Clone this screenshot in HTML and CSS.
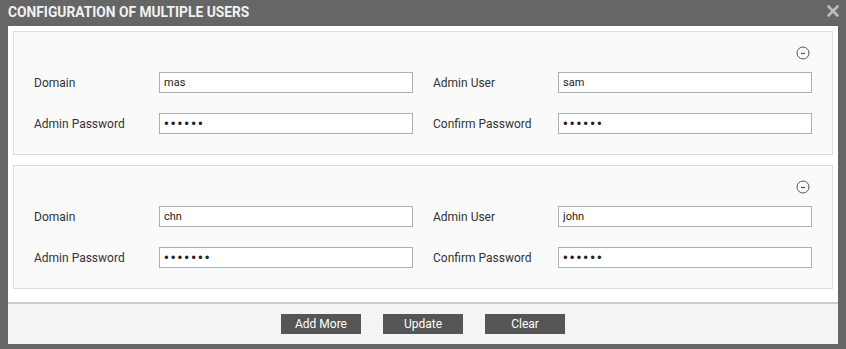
FILE: index.html
```html
<!DOCTYPE html>
<html lang="en">
<head>
    <meta charset="UTF-8">
    <meta name="viewport" content="width=device-width, initial-scale=1.0">
    <title>Configuration of multiple users</title>
    <link rel="stylesheet" href="styles.css">
</head>
<body>
    <div class="dialog">
        <header class="titlebar">
            <span>CONFIGURATION OF MULTIPLE USERS</span>
            <svg class="close" width="12" height="12" viewBox="0 0 12 12">
                <path d="M1.5 1.5 L10.5 10.5 M10.5 1.5 L1.5 10.5" stroke="#bdbdbd" stroke-width="2.6" stroke-linecap="round"/>
            </svg>
        </header>
        <div class="content">
            <div class="users">
                <div class="panel">
                    <div class="tools">
                        <svg class="minus" width="14" height="14" viewBox="0 0 14 14">
                            <circle cx="7" cy="7" r="6" fill="none" stroke="#555" stroke-width="1"/>
                            <line x1="5" y1="7.5" x2="9" y2="7.5" stroke="#555" stroke-width="1.2"/>
                        </svg>
                    </div>
                    <div class="fields">
                        <label>Domain</label>
                        <input type="text" value="mas">
                        <span></span>
                        <label>Admin User</label>
                        <input type="text" value="sam">
                        <label>Admin Password</label>
                        <input type="password" value="123456">
                        <span></span>
                        <label>Confirm Password</label>
                        <input type="password" value="123456">
                    </div>
                </div>
                <div class="panel">
                    <div class="tools">
                        <svg class="minus" width="14" height="14" viewBox="0 0 14 14">
                            <circle cx="7" cy="7" r="6" fill="none" stroke="#555" stroke-width="1"/>
                            <line x1="5" y1="7.5" x2="9" y2="7.5" stroke="#555" stroke-width="1.2"/>
                        </svg>
                    </div>
                    <div class="fields">
                        <label>Domain</label>
                        <input type="text" value="chn">
                        <span></span>
                        <label>Admin User</label>
                        <input type="text" value="john">
                        <label>Admin Password</label>
                        <input type="password" value="1234567">
                        <span></span>
                        <label>Confirm Password</label>
                        <input type="password" value="123456">
                    </div>
                </div>
            </div>
            <footer class="actions">
                <button>Add More</button>
                <button>Update</button>
                <button>Clear</button>
            </footer>
        </div>
    </div>
</body>
</html>
```

FILE: styles.css
```css
body {
    margin: 0;
    font-family: Roboto, "Liberation Sans", sans-serif;
    background-color: #666666;
}
.dialog {
    width: 846px;
    height: 349px;
    background-color: #666666;
    padding: 0 8px 5px;
    box-sizing: border-box;
    display: flex;
    flex-direction: column;
}
.titlebar {
    height: 26px;
    display: flex;
    align-items: center;
    justify-content: space-between;
    color: #f2f2f2;
    font-size: 13.8px;
    font-weight: bold;
    padding-bottom: 3px;
    box-sizing: border-box;
}
.close {
    margin-right: -1px;
    margin-top: -1px;
}
.content {
    flex: 1;
    background-color: #ffffff;
    display: flex;
    flex-direction: column;
}
.users {
    flex: 1;
    display: flex;
    flex-direction: column;
    gap: 10px;
    padding: 5px 5px 0;
}
.panel {
    border: 1px solid #dedede;
    background-color: #fafafa;
    padding: 14px 20px 20px;
}
.tools {
    display: flex;
    justify-content: flex-end;
    height: 12px;
    margin-bottom: 14px;
}
.minus {
    margin-right: 2px;
    margin-top: 0;
}
.fields {
    display: grid;
    grid-template-columns: 125px 254px 20px 125px 254px;
    grid-auto-rows: 21px;
    row-gap: 20px;
    align-items: center;
}
label {
    font-size: 12px;
    color: #333333;
}
input {
    height: 21px;
    box-sizing: border-box;
    border: 1px solid #a9afbd;
    background-color: #ffffff;
    padding: 0 4px;
    font-family: Roboto, "Liberation Sans", sans-serif;
    font-size: 11px;
    color: #222222;
    outline: none;
}
input[type="password"] {
    font-family: "DejaVu Sans", sans-serif;
    font-size: 11.5px;
    padding: 0 3px;
}
.actions {
    border-top: 2px solid #cccccc;
    background-color: #f4f4f4;
    height: 42px;
    box-sizing: border-box;
    display: flex;
    justify-content: center;
    align-items: center;
    gap: 22px;
}
button {
    width: 80px;
    height: 20px;
    border: none;
    background-color: #555555;
    color: #ffffff;
    font-family: Roboto, "Liberation Sans", sans-serif;
    font-size: 12px;
    padding: 0;
}
```
